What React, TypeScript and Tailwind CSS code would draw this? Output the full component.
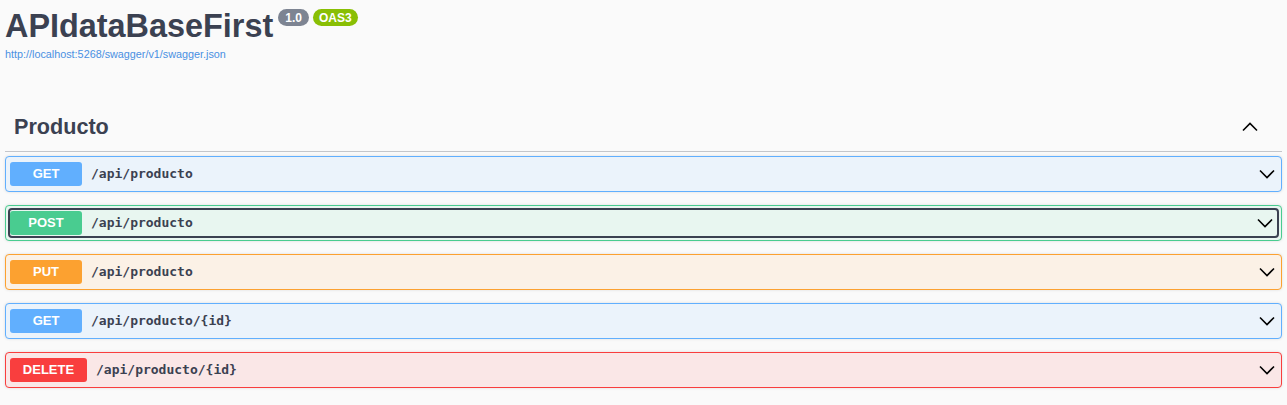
import React from 'react';

type Op = {
  method: string;
  path: string;
  border: string;
  bg: string;
  badge: string;
  badgeW: string;
  focused?: boolean;
};

const ops: Op[] = [
  { method: 'GET', path: '/api/producto', border: 'border-[#61affe]', bg: 'bg-[#ebf3fb]', badge: 'bg-[#61affe]', badgeW: 'w-[72px]' },
  { method: 'POST', path: '/api/producto', border: 'border-[#49cc90]', bg: 'bg-[#e8f6f0]', badge: 'bg-[#49cc90]', badgeW: 'w-[72px]', focused: true },
  { method: 'PUT', path: '/api/producto', border: 'border-[#fca130]', bg: 'bg-[#fbf1e6]', badge: 'bg-[#fca130]', badgeW: 'w-[72px]' },
  { method: 'GET', path: '/api/producto/{id}', border: 'border-[#61affe]', bg: 'bg-[#ebf3fb]', badge: 'bg-[#61affe]', badgeW: 'w-[72px]' },
  { method: 'DELETE', path: '/api/producto/{id}', border: 'border-[#f93e3e]', bg: 'bg-[#fae7e7]', badge: 'bg-[#f93e3e]', badgeW: 'w-[77px]' },
];

function Chevron({ up }: { up?: boolean }) {
  return (
    <svg width="20" height="20" viewBox="0 0 20 20" className="shrink-0">
      <path
        d={up ? 'M3 13.5 L10 6.5 L17 13.5' : 'M3 6.5 L10 13.5 L17 6.5'}
        fill="none"
        stroke="#000"
        strokeWidth="1.6"
      />
    </svg>
  );
}

function OpBlock({ op }: { op: Op }) {
  const inner = (
    <div className="flex items-center h-[24px]">
      <span
        className={`${op.badge} ${op.badgeW} h-[24px] rounded-[3px] flex items-center justify-center text-white text-[13px] font-bold shrink-0`}
      >
        {op.method}
      </span>
      <span className="ml-[9px] text-[13px] font-semibold text-[#3b4151] font-['DejaVu_Sans_Mono',monospace] flex-1">
        {op.path}
      </span>
      <Chevron />
    </div>
  );
  return (
    <div className={`border ${op.border} ${op.bg} rounded-[4px] h-[36px] mb-[13px] shadow-[0_0_3px_rgba(0,0,0,0.12)]`}>
      {op.focused ? (
        <div className="my-[2px] mx-[2px] border-2 border-[#3b4151] rounded-[4px] h-[30px] flex flex-col justify-center pr-[2px]">
          {inner}
        </div>
      ) : (
        <div className="px-[4px] py-[5px]">{inner}</div>
      )}
    </div>
  );
}

export default function App() {
  return (
    <div className="min-h-[405px] bg-[#fafafa] font-['Liberation_Sans',Arial,sans-serif] text-[#3b4151] px-[5px]">
      <div className="pt-[6px] flex items-start">
        <h1 className="text-[32.4px] leading-[40px] font-bold text-[#3b4151]">APIdataBaseFirst</h1>
        <span className="ml-[5px] mt-[3px] h-[17px] px-[7px] rounded-full bg-[#7d8492] text-white text-[12px] font-bold flex items-center">1.0</span>
        <span className="ml-[4px] mt-[3px] h-[17px] px-[6px] rounded-full bg-[#89bf04] text-white text-[12px] font-bold flex items-center">OAS3</span>
      </div>
      <a className="block mt-[2px] text-[10.8px] leading-[13px] text-[#4990e2]">http://localhost:5268/swagger/v1/swagger.json</a>

      <div className="mt-[50px] flex items-center justify-between border-b border-[#c4c6cb] pb-[8px] pl-[9px] pr-[22px]">
        <h3 className="text-[21.6px] leading-[32px] font-bold text-[#3b4151]">Producto</h3>
        <Chevron up />
      </div>
      <div className="mt-[4px]">
        {ops.map((op, i) => (
          <OpBlock key={i} op={op} />
        ))}
      </div>
    </div>
  );
}
